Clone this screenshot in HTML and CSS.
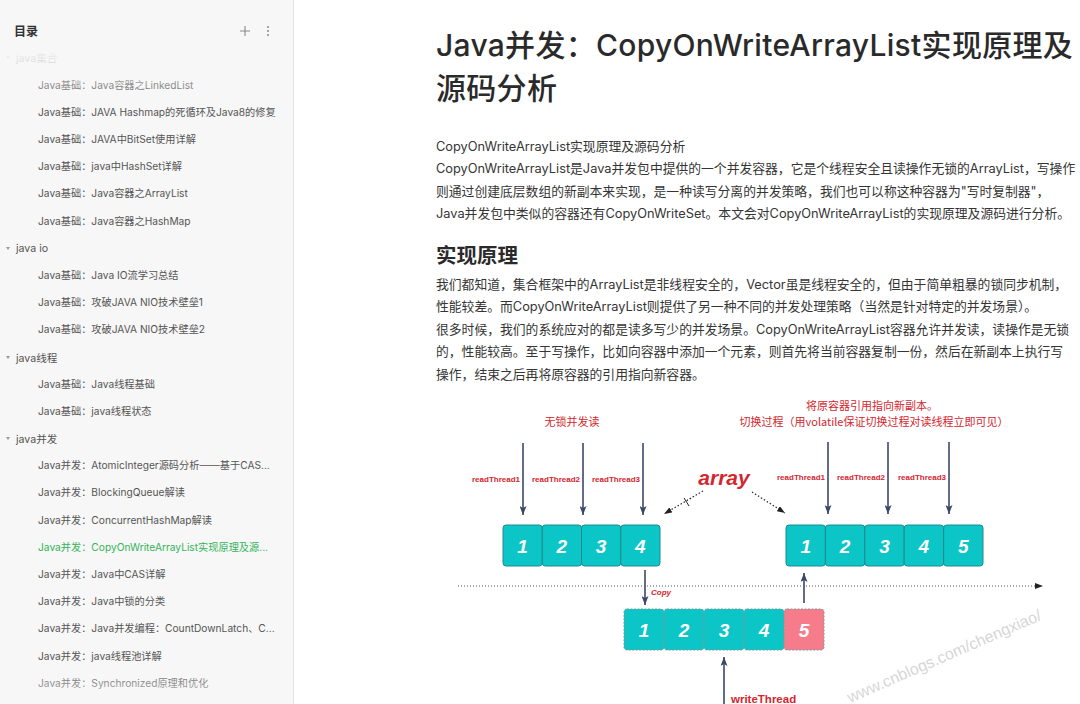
FILE: index.html
```html
<!DOCTYPE html>
<html lang="zh-CN">
<head>
<meta charset="utf-8">
<title>Java并发：CopyOnWriteArrayList实现原理及源码分析</title>
<link rel="stylesheet" href="styles.css">
</head>
<body>
<div class="app">
  <aside class="sidebar">
    <div class="side-head">
      <span class="side-title">目录</span>
      <div class="side-actions">
        <svg class="icon" width="12" height="12" viewBox="0 0 12 12"><path d="M6 1v10M1 6h10" stroke="#8a8a8a" stroke-width="1.1" fill="none"/></svg>
        <svg class="icon" width="4" height="12" viewBox="0 0 4 12"><circle cx="2" cy="2" r="1" fill="#8a8a8a"/><circle cx="2" cy="6" r="1" fill="#8a8a8a"/><circle cx="2" cy="10" r="1" fill="#8a8a8a"/></svg>
      </div>
    </div>
    <ul class="toc">
      <li class="group"><span class="caret"></span>java集合</li>
      <li class="leaf">Java基础：Java容器之LinkedList</li>
      <li class="leaf">Java基础：JAVA Hashmap的死循环及Java8的修复</li>
      <li class="leaf">Java基础：JAVA中BitSet使用详解</li>
      <li class="leaf">Java基础：java中HashSet详解</li>
      <li class="leaf">Java基础：Java容器之ArrayList</li>
      <li class="leaf">Java基础：Java容器之HashMap</li>
      <li class="group"><span class="caret"></span>java io</li>
      <li class="leaf">Java基础：Java IO流学习总结</li>
      <li class="leaf">Java基础：攻破JAVA NIO技术壁垒1</li>
      <li class="leaf">Java基础：攻破JAVA NIO技术壁垒2</li>
      <li class="group"><span class="caret"></span>java线程</li>
      <li class="leaf">Java基础：Java线程基础</li>
      <li class="leaf">Java基础：java线程状态</li>
      <li class="group"><span class="caret"></span>java并发</li>
      <li class="leaf">Java并发：AtomicInteger源码分析——基于CAS...</li>
      <li class="leaf">Java并发：BlockingQueue解读</li>
      <li class="leaf">Java并发：ConcurrentHashMap解读</li>
      <li class="leaf active">Java并发：CopyOnWriteArrayList实现原理及源...</li>
      <li class="leaf">Java并发：Java中CAS详解</li>
      <li class="leaf">Java并发：Java中锁的分类</li>
      <li class="leaf">Java并发：Java并发编程：CountDownLatch、C...</li>
      <li class="leaf">Java并发：java线程池详解</li>
      <li class="leaf">Java并发：Synchronized原理和优化</li>
    </ul>
    <div class="fade fade-top"></div>
    <div class="fade fade-bottom"></div>
  </aside>
  <main class="main">
    <article class="doc">
      <h1>Java并发：CopyOnWriteArrayList实现原理及源码分析</h1>
      <p>CopyOnWriteArrayList实现原理及源码分析</p>
      <p>CopyOnWriteArrayList是Java并发包中提供的一个并发容器，它是个线程安全且读操作无锁的ArrayList，写操作<br>则通过创建底层数组的新副本来实现，是一种读写分离的并发策略，我们也可以称这种容器为"写时复制器"，<br>Java并发包中类似的容器还有CopyOnWriteSet。本文会对CopyOnWriteArrayList的实现原理及源码进行分析。</p>
      <h2>实现原理</h2>
      <p>我们都知道，集合框架中的ArrayList是非线程安全的，Vector虽是线程安全的，但由于简单粗暴的锁同步机制，<br>性能较差。而CopyOnWriteArrayList则提供了另一种不同的并发处理策略（当然是针对特定的并发场景）。</p>
      <p>很多时候，我们的系统应对的都是读多写少的并发场景。CopyOnWriteArrayList容器允许并发读，读操作是无锁<br>的，性能较高。至于写操作，比如向容器中添加一个元素，则首先将当前容器复制一份，然后在新副本上执行写<br>操作，结束之后再将原容器的引用指向新容器。</p>
      <figure class="figure">
        <svg class="diagram" width="644" height="320" viewBox="436 390 644 320">
          <defs>
            <marker id="ah" markerUnits="userSpaceOnUse" markerWidth="9" markerHeight="7" refX="9" refY="3.5" orient="auto">
              <path d="M0,0 L9,3.5 L0,7 L2,3.5 z" fill="#3b4868"/>
            </marker>
            <marker id="as" markerUnits="userSpaceOnUse" markerWidth="8" markerHeight="6" refX="8" refY="3" orient="auto">
              <path d="M0,0 L8,3 L0,6 z" fill="#222"/>
            </marker>
          </defs>
          <g class="red-cn">
            <text x="572" y="425" text-anchor="middle">无锁并发读</text>
            <text x="872" y="409" text-anchor="middle">将原容器引用指向新副本。</text>
            <text x="874" y="425" text-anchor="middle">切换过程（用volatile保证切换过程对读线程立即可见）</text>
          </g>
          <g class="arrows" stroke="#3b4868" stroke-width="1.6" marker-end="url(#ah)">
            <line x1="523" y1="442" x2="523" y2="514"/>
            <line x1="583" y1="442" x2="583" y2="514"/>
            <line x1="643" y1="442" x2="643" y2="514"/>
            <line x1="828" y1="441" x2="828" y2="513"/>
            <line x1="888" y1="441" x2="888" y2="513"/>
            <line x1="949" y1="441" x2="949" y2="513"/>
            <line x1="645" y1="569" x2="645" y2="604"/>
            <line x1="804" y1="602" x2="804" y2="572"/>
            <line x1="724" y1="712" x2="724" y2="656"/>
          </g>
          <g class="small-red" text-anchor="middle">
            <text x="496" y="481">readThread1</text>
            <text x="556" y="481">readThread2</text>
            <text x="616" y="481">readThread3</text>
            <text x="801" y="479">readThread1</text>
            <text x="861" y="479">readThread2</text>
            <text x="922" y="479">readThread3</text>
          </g>
          <text class="array-label" x="724" y="484" text-anchor="middle">array</text>
          <g stroke="#222" stroke-width="1.2" stroke-dasharray="1.5 2" fill="none">
            <line x1="703" y1="490" x2="664" y2="513" marker-end="url(#as)"/>
            <line x1="752" y1="491" x2="785" y2="512" marker-end="url(#as)"/>
            <line x1="458" y1="585" x2="1043" y2="585" stroke-width="1" stroke="#555" stroke-dasharray="1 2" marker-end="url(#as)"/>
          </g>
          <line x1="684" y1="497" x2="689" y2="505" stroke="#222" stroke-width="1"/>
          <g class="cells" stroke="#1d8b8c" stroke-width="1">
            <rect x="503" y="524" width="39.25" height="41" rx="3"/>
            <rect x="542.25" y="524" width="39.25" height="41" rx="3"/>
            <rect x="581.5" y="524" width="39.25" height="41" rx="3"/>
            <rect x="620.75" y="524" width="39.25" height="41" rx="3"/>
            <rect x="786" y="524" width="39.4" height="41" rx="3"/>
            <rect x="825.4" y="524" width="39.4" height="41" rx="3"/>
            <rect x="864.8" y="524" width="39.4" height="41" rx="3"/>
            <rect x="904.2" y="524" width="39.4" height="41" rx="3"/>
            <rect x="943.6" y="524" width="39.4" height="41" rx="3"/>
          </g>
          <g class="cells" stroke="#7f9a9a" stroke-width="1" stroke-dasharray="2 1.5">
            <rect x="624" y="608" width="40" height="41" rx="3"/>
            <rect x="664" y="608" width="40" height="41" rx="3"/>
            <rect x="704" y="608" width="40" height="41" rx="3"/>
            <rect x="744" y="608" width="40" height="41" rx="3"/>
            <rect class="new-cell" x="784" y="608" width="40" height="41" rx="3"/>
          </g>
          <g class="nums" text-anchor="middle">
            <text x="522.6" y="552">1</text>
            <text x="561.9" y="552">2</text>
            <text x="601.1" y="552">3</text>
            <text x="640.4" y="552">4</text>
            <text x="805.7" y="552">1</text>
            <text x="845.1" y="552">2</text>
            <text x="884.5" y="552">3</text>
            <text x="923.9" y="552">4</text>
            <text x="963.3" y="552">5</text>
            <text x="644" y="636">1</text>
            <text x="684" y="636">2</text>
            <text x="724" y="636">3</text>
            <text x="764" y="636">4</text>
            <text x="804" y="636">5</text>
          </g>
          <text class="copy-label" x="651" y="594">Copy</text>
          <text class="write-label" x="731" y="702">writeThread</text>
          <text class="watermark" x="850" y="702" transform="rotate(-23.5 850 702)">www.cnblogs.com/chengxiao/</text>
        </svg>
      </figure>
    </article>
  </main>
</div>
</body>
</html>
```
FILE: styles.css
```css
html, body {
  margin: 0;
  height: 100%;
  overflow: hidden;
  background: #fff;
}
.app {
  display: flex;
  height: 704px;
  font-family: Inter, "Noto Sans CJK SC", sans-serif;
}
.sidebar {
  width: 293px;
  flex: none;
  background: #f7f7f7;
  border-right: 1px solid #e7e7e7;
  position: relative;
  overflow: hidden;
}
.side-head {
  height: 44.4px;
  box-sizing: border-box;
  padding: 17.6px 23px 0 14px;
  display: flex;
  align-items: center;
  justify-content: space-between;
}
.side-title {
  font-size: 12px;
  font-weight: 700;
  color: #333;
}
.side-actions {
  display: flex;
  align-items: center;
  gap: 15px;
}
.icon { display: block; }
.toc {
  list-style: none;
  margin: 0;
  padding: 0;
}
.toc li {
  height: 27.2px;
  display: flex;
  align-items: center;
  font-size: 10.2px;
  color: #555;
  white-space: nowrap;
}
.toc .group {
  padding-left: 6px;
  font-size: 10.6px;
}
.caret {
  width: 0;
  height: 0;
  border-left: 2.5px solid transparent;
  border-right: 2.5px solid transparent;
  border-top: 3.5px solid #9a9a9a;
  margin-right: 6px;
}
.toc .leaf {
  padding-left: 38px;
  padding-right: 14px;
  overflow: hidden;
  text-overflow: ellipsis;
  display: block;
  line-height: 27.2px;
}
.toc .active {
  color: #33b35a;
}
.fade {
  position: absolute;
  left: 0;
  right: 0;
  pointer-events: none;
}
.fade-top {
  top: 44px;
  height: 58px;
  background: linear-gradient(to bottom, rgba(247,247,247,1) 0%, rgba(247,247,247,0.85) 30%, rgba(247,247,247,0) 100%);
}
.fade-bottom {
  bottom: 0;
  height: 40px;
  background: linear-gradient(to bottom, rgba(247,247,247,0), rgba(247,247,247,0.75));
}
.main {
  flex: 1;
  min-width: 0;
  padding: 23.5px 0 0 142px;
  color: #333;
}
.doc {
  width: 644px;
}
h1 {
  margin: 0 0 26.3px;
  font-size: 30px;
  line-height: 43px;
  font-weight: 500;
  letter-spacing: 0.3px;
  color: #2a2a2a;
}
p {
  margin: 0;
  font-size: 12.8px;
  line-height: 22.4px;
  color: #353535;
  white-space: nowrap;
}
h2 {
  margin: 16.8px 0 3.8px;
  font-size: 20.5px;
  line-height: 28px;
  font-weight: 700;
  color: #2a2a2a;
}
.figure {
  margin: 4.8px 0 0;
}
.diagram {
  display: block;
  overflow: visible;
}
.red-cn text {
  font-family: "Noto Sans CJK SC", sans-serif;
  font-size: 11px;
  fill: #d3262e;
}
.small-red text {
  font-family: "Liberation Sans", sans-serif;
  font-size: 8px;
  font-weight: 700;
  fill: #d3262e;
}
.array-label {
  font-family: "Liberation Sans", sans-serif;
  font-size: 21px;
  font-weight: 700;
  font-style: italic;
  fill: #d3262e;
}
.cells rect {
  fill: #0bc5c7;
}
.cells .new-cell {
  fill: #f77c8b;
}
.nums text {
  font-family: "Liberation Sans", sans-serif;
  font-size: 19px;
  font-weight: 700;
  font-style: italic;
  fill: #fff;
}
.copy-label {
  font-family: "Liberation Sans", sans-serif;
  font-size: 8px;
  font-weight: 700;
  font-style: italic;
  fill: #d3262e;
}
.write-label {
  font-family: "Liberation Sans", sans-serif;
  font-size: 11.5px;
  font-weight: 700;
  fill: #d3262e;
}
.watermark {
  font-family: "Liberation Sans", sans-serif;
  font-size: 16px;
  fill: #d6d6d6;
}
```
